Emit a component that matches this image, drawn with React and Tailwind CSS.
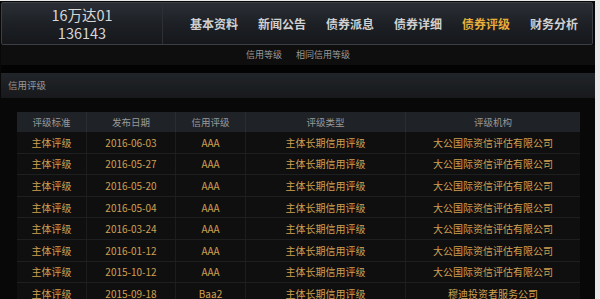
// Bond rating page — dark terminal style
import React from 'react';

const NAV = ['基本资料', '新闻公告', '债券派息', '债券详细', '债券评级', '财务分析'];

const ROWS = [
  ['主体评级', '2016-06-03', 'AAA', '主体长期信用评级', '大公国际资信评估有限公司'],
  ['主体评级', '2016-05-27', 'AAA', '主体长期信用评级', '大公国际资信评估有限公司'],
  ['主体评级', '2016-05-20', 'AAA', '主体长期信用评级', '大公国际资信评估有限公司'],
  ['主体评级', '2016-05-04', 'AAA', '主体长期信用评级', '大公国际资信评估有限公司'],
  ['主体评级', '2016-03-24', 'AAA', '主体长期信用评级', '大公国际资信评估有限公司'],
  ['主体评级', '2016-01-12', 'AAA', '主体长期信用评级', '大公国际资信评估有限公司'],
  ['主体评级', '2015-10-12', 'AAA', '主体长期信用评级', '大公国际资信评估有限公司'],
  ['主体评级', '2015-09-18', 'Baa2', '主体长期信用评级', '穆迪投资者服务公司'],
];

const HEAD = ['评级标准', '发布日期', '信用评级', '评级类型', '评级机构'];

// column widths (px) — table spans x 17..580
const COLS = ['w-[70px]', 'w-[89px]', 'w-[70px]', 'w-[160px]', 'w-[174px]'];

export default function App() {
  return (
    <div
      className="w-[600px] h-[299px] bg-[#e9e9e9] overflow-hidden pt-[1px]"
      style={{ fontFamily: '"Noto Sans CJK SC", "Noto Sans", sans-serif' }}
    >
      <div className="w-[595px] h-[298px] bg-[#080808] pl-[1px] flex flex-col">

        {/* ── Top header bar ── */}
        <div className="h-[43px] mt-[1px] mr-[2px] flex items-center border border-[#3b3f45] rounded-[2px] bg-gradient-to-b from-[#2b2f35] via-[#1d2025] to-[#15171b] shrink-0">
          <div className="w-[160px] flex flex-col items-center justify-center text-[#d6d6d6] text-[14.5px] leading-[18px]">
            <span>16万达01</span>
            <span>136143</span>
          </div>
          <div className="w-[1px] h-[40px] bg-[#2c3036]" />
          <nav className="flex items-center gap-[20px] ml-[27px] text-[12px] font-bold">
            {NAV.map((n) => (
              <span key={n} className={n === '债券评级' ? 'text-[#e8ae3c]' : 'text-[#d0d0d0]'}>
                {n}
              </span>
            ))}
          </nav>
        </div>

        {/* ── Sub nav ── */}
        <div className="h-[20px] bg-[#0e0e0f] flex items-center gap-[14px] pl-[245px] text-[9px] text-[#9c9c9c] shrink-0">
          <span>信用等级</span>
          <span>相同信用等级</span>
        </div>
        <div className="h-[8px] bg-[#030303] shrink-0" />

        {/* ── Section header ── */}
        <div className="h-[25px] flex items-center pl-[7px] text-[9.5px] text-[#9a9a9a] bg-gradient-to-b from-[#212428] to-[#17191c] shrink-0">
          信用评级
        </div>

        {/* ── Rating table ── */}
        <div className="pl-[16px] pt-[14px]">
          <div className="w-[563px] bg-[#0f0f10]">
            <div className="flex h-[20px] bg-[#1f2226] text-[9.5px] text-[#9a9a9a]">
              {HEAD.map((h, i) => (
                <div key={h} className={`${COLS[i]} flex items-center justify-center border-r border-[#2a2d31] last:border-r-0`}>
                  {h}
                </div>
              ))}
            </div>
            {ROWS.map((r, ri) => (
              <div key={ri} className="flex h-[21.6px] border-b border-[#1e1f21] text-[10px] text-[#d0a052]">
                {r.map((c, i) => (
                  <div key={i} className={`${COLS[i]} flex items-center justify-center border-r border-[#1c1d1f] last:border-r-0`}>
                    {c}
                  </div>
                ))}
              </div>
            ))}
          </div>
        </div>
      </div>
    </div>
  );
}
